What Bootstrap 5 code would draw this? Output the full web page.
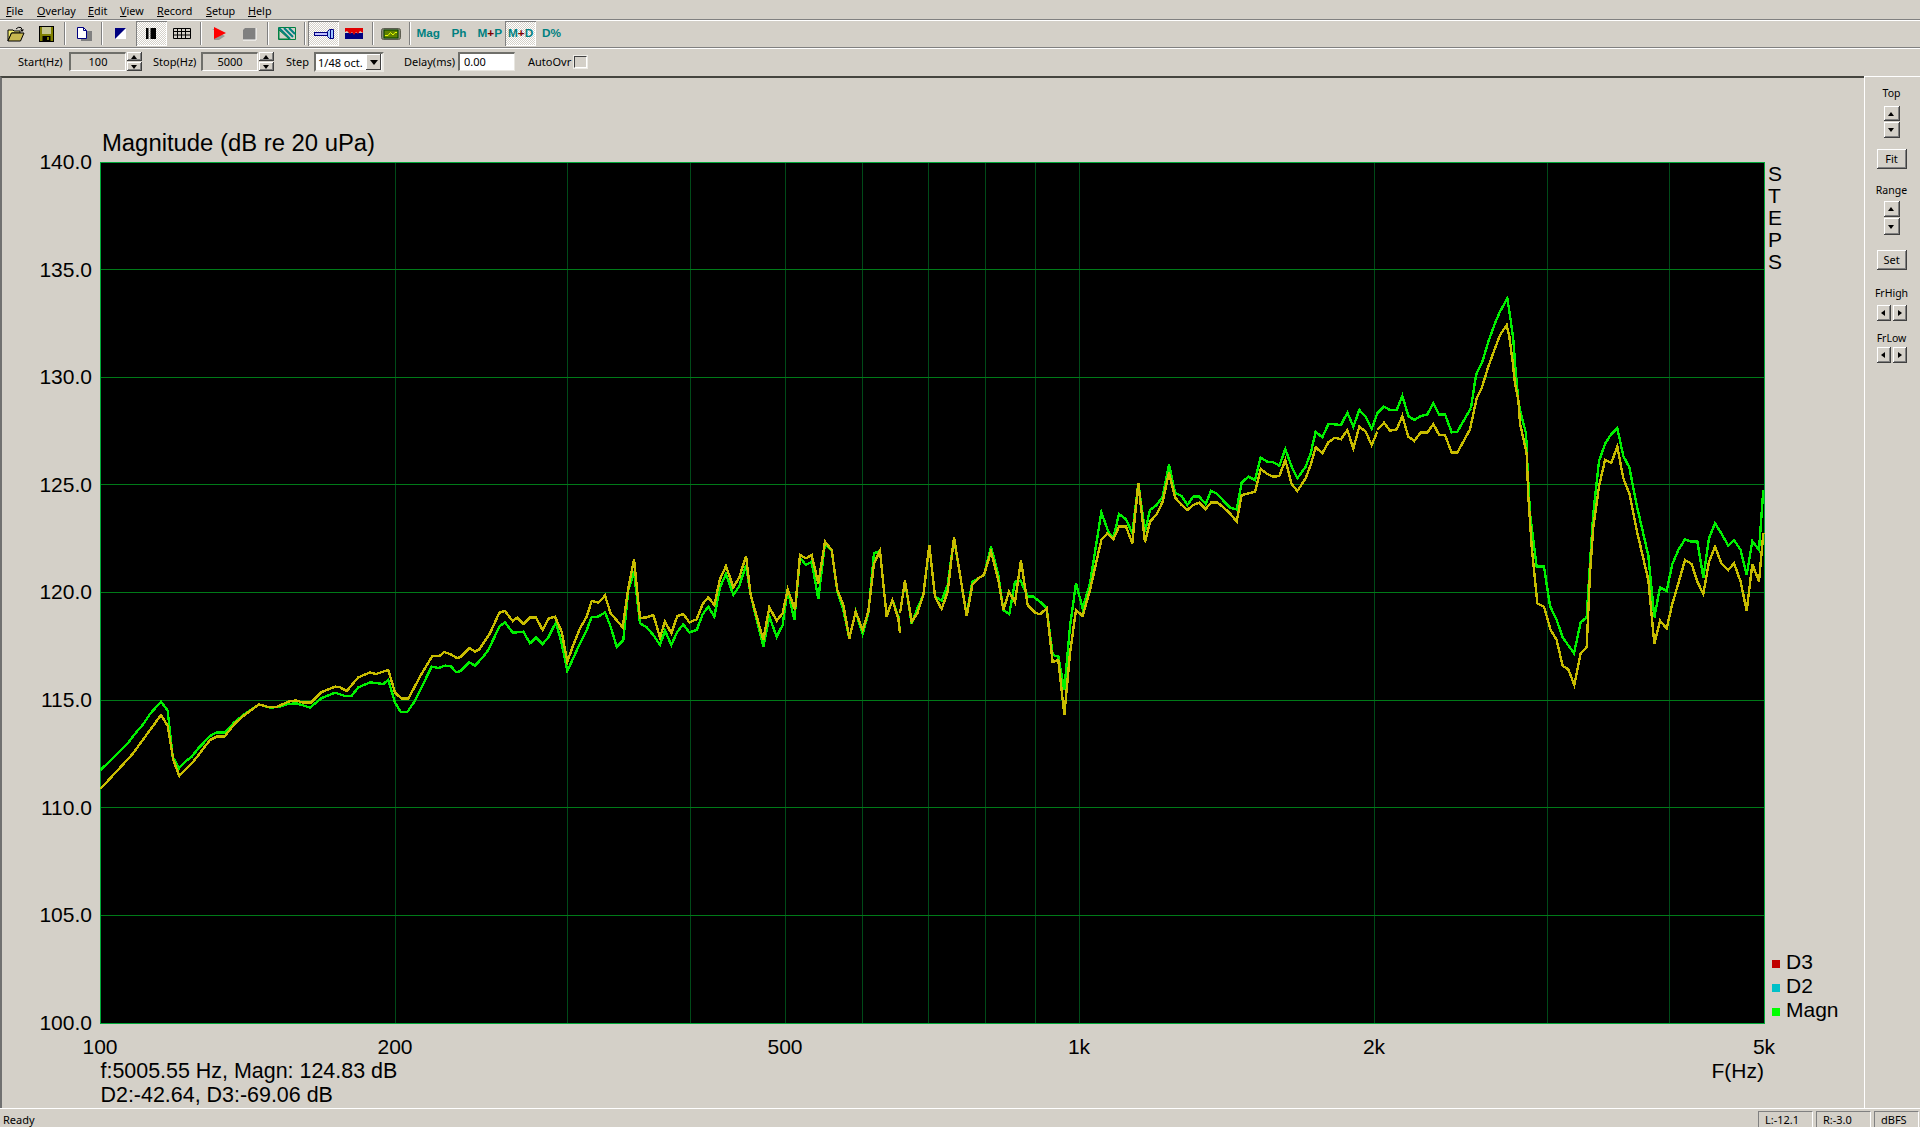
<!DOCTYPE html>
<html lang="en">
<head>
<meta charset="utf-8">
<title>Magnitude</title>
<link href="https://cdn.jsdelivr.net/npm/bootstrap@5.3.0/dist/css/bootstrap.min.css" rel="stylesheet">
<style>
html,body{height:100%;margin:0;overflow:hidden}
body{background:#d4d0c8;color:#000;font-family:"Noto Sans","DejaVu Sans",sans-serif;font-size:11px;line-height:14px}
.app-shell{height:1127px}
.menu-strip{height:20px;padding-left:6px;padding-top:3px;border-bottom:1px solid #808080}
.menu-strip .nav-link{color:#000;padding:0;font-size:10.8px;line-height:15px}
.m1{width:31px}.m2{width:51px}.m3{width:32px}.m4{width:37px}.m5{width:49px}.m6{width:42px}.m7{width:30px}
.tool-strip{height:28px;border-top:1px solid #fff;border-bottom:1px solid #808080;padding:0 0 1px .6px}
.btn.tool-btn{width:30.8px;height:25px;padding:0;border:0;border-radius:0;background:transparent;color:#008080;font:bold 11.8px/25px "Liberation Sans",sans-serif;display:flex;align-items:center;justify-content:center;flex:none}
.btn.tool-btn.is-on{background:repeating-conic-gradient(#fff 0 25%,#d4d0c8 0 50%) 0 0/2px 2px;box-shadow:inset 1px 1px #808080,inset -1px -1px #fff}
.plus-mark{color:#800000}
.tool-sep{width:6.1px;height:25px;flex:none;position:relative}
.tool-sep::before{content:"";display:block;margin:1px auto 0;width:2px;height:23px;background:linear-gradient(90deg,#808080 50%,#fff 50%)}
.param-strip{height:28px;border-top:1px solid #fff;padding:3px 0 0 18px}
.param-lbl{height:19px;line-height:19px;white-space:nowrap;flex:none}
.w51{width:51px}.w48{width:48px}.w28{width:28px}.w54{width:54px}.w46{width:46px}
.ml11{margin-left:11px}.ml12{margin-left:12px}.ml20{margin-left:20px}.ml13{margin-left:13px}
.sunk-box{width:57px;height:19px;flex:none;border-top:2px solid #6f6f6a;border-left:2px solid #6f6f6a;border-right:1px solid #fff;border-bottom:1px solid #fff;text-align:center;line-height:16px}
.sunk-box.is-white{background:#fff;text-align:left;padding-left:4px;border-color:#6f6f6a #e8e6e0 #e8e6e0 #6f6f6a}
.combo-box{width:70px;height:20px;flex:none;background:#fff;border:2px solid #6f6f6a;border-right-color:#e8e6e0;border-bottom-color:#e8e6e0;padding-left:2px;line-height:17px;position:relative}
.combo-arrow{position:absolute;right:1px;top:0;width:15px;height:16px;background:#d4d0c8;box-shadow:inset -1px -1px #404040,inset 1px 1px #fff}
.combo-arrow::after{content:"";position:absolute;left:3.5px;top:6px;border-left:4px solid transparent;border-right:4px solid transparent;border-top:5px solid #000}
.check-box{width:13px;height:12px;margin-top:4px;flex:none;background:#d4d0c8;border-top:1px solid #404040;border-left:1px solid #404040;border-right:1px solid #fff;border-bottom:1px solid #fff;box-shadow:0 0 0 1px #eeece6}
.raised-box{background:#d4d0c8;box-shadow:inset -1px -1px #404040,inset 1px 1px #fff,inset -2px -2px #808080;position:relative;flex:none}
.spin-pair{width:15.5px;height:19px;margin-left:.5px;gap:1px;flex:none}
.spin-pair .raised-box{height:9px}
.tri-up::after,.tri-down::after,.tri-left::after,.tri-right::after{content:"";position:absolute}
.tri-up::after{left:50%;top:50%;margin:-2px 0 0 -3.5px;border-left:3.5px solid transparent;border-right:3.5px solid transparent;border-bottom:4px solid #000}
.tri-down::after{left:50%;top:50%;margin:-2px 0 0 -3.5px;border-left:3.5px solid transparent;border-right:3.5px solid transparent;border-top:4px solid #000}
.tri-left::after{left:50%;top:50%;margin:-3.5px 0 0 -2.5px;border-top:3.5px solid transparent;border-bottom:3.5px solid transparent;border-right:4px solid #000}
.tri-right::after{left:50%;top:50%;margin:-3.5px 0 0 -1.5px;border-top:3.5px solid transparent;border-bottom:3.5px solid transparent;border-left:4px solid #000}
.main-row{flex:1 1 auto;min-height:0}
.chart-pane{width:1864px;flex:none;border-top:2px solid #45453f;border-left:2px solid #707070}
.chart-pane svg{display:block}
.chart-text{font-family:"Liberation Sans",Arial,sans-serif;font-size:21px;fill:#000}
.chart-title{font-size:23.85px}
.chart-read{font-size:21.45px}
.trace-line{fill:none;stroke-width:2.4;vector-effect:non-scaling-stroke;stroke-linejoin:miter}
.trace-g{stroke:#00f000}
.trace-y{stroke:#c8bc00}
.side-pane{width:56px;flex:none;border-top:1px solid #fff;border-left:1px solid #fff;padding:9px 2px 0 0;font-size:10.5px}
.side-pane .s-lbl{height:14px;line-height:14px}
.v-spin{width:16px}
.v-spin .s1{height:15px;width:16px}
.v-spin .s2{height:16px;width:16px;margin-top:1px}
.v-spin.v2 .s1{height:16px}.v-spin.v2 .s2{height:17px}
.btn.flat-btn{width:30px;height:20px;padding:0;border:0;border-radius:0;font:11px/20px "Noto Sans",sans-serif;color:#000}
.h-spin{width:30px;height:16px;justify-content:space-between}
.h-spin .raised-box{width:14px;height:16px}
.mt6{margin-top:6px}.mt11{margin-top:11px}.mt14{margin-top:14px}.mt4{margin-top:4px}.mt15{margin-top:15px}.mt16{margin-top:16px}.mt5{margin-top:5px}.mt10{margin-top:10px}.mt2{margin-top:2px}
.status-strip{height:19px;flex:none;border-top:1px solid #fff;padding:2px 1px 0 3px;position:relative}
.status-ready{line-height:17px}
.status-cell{height:17px;line-height:16px;border-top:1px solid #808080;border-left:1px solid #808080;padding-left:6px;border-right:1px solid #fff;flex:none}
.c55{width:55px;margin-right:3px}.c45{width:45px}
</style>
</head>
<body>
<div class="app-shell d-flex flex-column">
  <nav class="menu-strip nav flex-nowrap flex-shrink-0">
    <a class="nav-link m1" href="#"><u>F</u>ile</a>
    <a class="nav-link m2" href="#"><u>O</u>verlay</a>
    <a class="nav-link m3" href="#"><u>E</u>dit</a>
    <a class="nav-link m4" href="#"><u>V</u>iew</a>
    <a class="nav-link m5" href="#"><u>R</u>ecord</a>
    <a class="nav-link m6" href="#"><u>S</u>etup</a>
    <a class="nav-link m7" href="#"><u>H</u>elp</a>
  </nav>

  <div class="tool-strip d-flex align-items-center flex-shrink-0">
    <button class="btn tool-btn" type="button" aria-label="Open"><svg width="18" height="16" viewBox="0 0 18 16"><path d="M1 4h5l1 1h6v2H4.500L1 15z" fill="#f4ee70" stroke="#000"/><path d="M1 15 4.500 7H17l-3.500 8z" fill="#c8b850" stroke="#000"/><path d="M9 3Q11 .5 14 1.500l1 2" fill="none" stroke="#000"/><path d="M13 3.500h4l-2 2.500z"/></svg></button>
    <button class="btn tool-btn" type="button" aria-label="Save"><svg width="16" height="16" viewBox="0 0 16 16"><rect x=".5" y=".5" width="14" height="15" fill="#808000" stroke="#000"/><rect x="3" y="1" width="9" height="7" fill="#c4c490"/><rect x="3.500" y="10" width="8" height="5" fill="#000"/><rect x="8" y="11" width="2" height="3" fill="#808000"/></svg></button>
    <div class="tool-sep"></div>
    <button class="btn tool-btn" type="button" aria-label="Page"><svg width="16" height="14" viewBox="0 0 16 14"><rect x="5" y="4" width="11" height="10" fill="#808080"/><path d="M1.500.5h6l3 3v8h-9z" fill="#fff" stroke="#000080"/><path d="M7.500.5v3h3" fill="none" stroke="#000080"/></svg></button>
    <div class="tool-sep"></div>
    <button class="btn tool-btn" type="button" aria-label="Invert"><svg width="11" height="11" viewBox="0 0 11 11"><rect width="11" height="11" fill="#fff"/><path d="M0 0h11L0 11z" fill="#000080"/></svg></button>
    <button class="btn tool-btn is-on" type="button" aria-label="Pause"><svg width="12" height="11" viewBox="0 0 12 11"><rect x="1" width="2.500" height="11"/><rect x="5.500" width="5.500" height="11"/></svg></button>
    <button class="btn tool-btn" type="button" aria-label="Table"><svg width="18" height="11" viewBox="0 0 18 11"><path d="M.5.500h17v10H.500zM.5 3.500h17M.5 7h17M4.500.500v10M8.500.500v10M12.500.500v10" fill="none" stroke="#000"/></svg></button>
    <div class="tool-sep"></div>
    <button class="btn tool-btn" type="button" aria-label="Run"><svg width="16" height="14" viewBox="0 0 16 14"><path d="M1 2h2v11h5l6-4z" fill="#9a9a94"/><path d="M3 0l12 6L3 12z" fill="#f00"/></svg></button>
    <button class="btn tool-btn" type="button" aria-label="Stop"><svg width="15" height="14" viewBox="0 0 15 14"><path d="M3 1h11v12H1V3z" fill="#808080"/><path d="M14 1v12H1" fill="none" stroke="#fff"/></svg></button>
    <div class="tool-sep"></div>
    <button class="btn tool-btn" type="button" aria-label="Sweep"><svg width="18" height="13" viewBox="0 0 18 13"><path d="M.5.500H17.500v12H.500z" fill="#d4d0c8" stroke="#008040"/><path d="M1 1l11 11M6 1l9 9M11 1l6 6" stroke="#008080" stroke-width="2"/><path d="M1 3 1 12H11z" fill="#d4d0c8" stroke="#008040"/></svg></button>
    <div class="tool-sep"></div>
    <button class="btn tool-btn is-on" type="button" aria-label="Probe"><svg width="20" height="10" viewBox="0 0 20 10"><rect x=".5" y="3.500" width="13" height="3" fill="#c0c0ff" stroke="#000080"/><path d="M13.500 2.500 15.500.5h4v9h-4l-2-2z" fill="#a0c8ff" stroke="#000080"/><path d="M16.500.5v9" stroke="#000080"/></svg></button>
    <button class="btn tool-btn" type="button" aria-label="Spectrum"><svg width="18" height="11" viewBox="0 0 18 11"><rect y="5" width="18" height="6" fill="#000080"/><path d="M0 0h18v5l-3-2-2 3-2-2-2 3-2-3-2 2-3-3-2 1z" fill="#e00000"/></svg></button>
    <div class="tool-sep"></div>
    <button class="btn tool-btn" type="button" aria-label="Scope"><svg width="20" height="12" viewBox="0 0 20 12"><rect x=".5" y=".5" width="19" height="11" rx="2" fill="#8c8c78" stroke="#5c5c50"/><rect x="3" y="2" width="14" height="8" fill="#608000" stroke="#004000"/><path d="M4 7.500 7 7.500 9.500 4.500 12 7l2-2.500h2" fill="none" stroke="#e8ff00"/></svg></button>
    <div class="tool-sep"></div>
    <button class="btn tool-btn" type="button">Mag</button>
    <button class="btn tool-btn" type="button">Ph</button>
    <button class="btn tool-btn" type="button"><span>M<span class="plus-mark">+</span>P</span></button>
    <button class="btn tool-btn is-on" type="button"><span>M<span class="plus-mark">+</span>D</span></button>
    <button class="btn tool-btn" type="button">D%</button>
  </div>

  <div class="param-strip d-flex align-items-start flex-shrink-0">
    <span class="param-lbl w51">Start(Hz)</span>
    <div class="sunk-box">100</div>
    <div class="spin-pair d-flex flex-column"><div class="raised-box tri-up"></div><div class="raised-box tri-down"></div></div>
    <span class="param-lbl w48 ml11">Stop(Hz)</span>
    <div class="sunk-box">5000</div>
    <div class="spin-pair d-flex flex-column"><div class="raised-box tri-up"></div><div class="raised-box tri-down"></div></div>
    <span class="param-lbl w28 ml12">Step</span>
    <div class="combo-box">1/48 oct.<span class="combo-arrow"></span></div>
    <span class="param-lbl w54 ml20">Delay(ms)</span>
    <div class="sunk-box is-white">0.00</div>
    <span class="param-lbl w46 ml13">AutoOvr</span>
    <div class="check-box"></div>
  </div>

  <div class="main-row d-flex">
    <div class="chart-pane">
      <svg width="1862" height="1030" viewBox="2 78 1862 1030" role="img" aria-label="Magnitude chart">
        <rect x="100" y="162" width="1664" height="861" fill="#000"/>
        <g shape-rendering="crispEdges" stroke="#004a18" stroke-width="1">
          <path d="M395.500 162V1023M567.500 162V1023M690.500 162V1023M785.500 162V1023M862.500 162V1023M928.500 162V1023M985.500 162V1023M1035.500 162V1023M1079.500 162V1023M1374.500 162V1023M1547.500 162V1023M1669.500 162V1023"/>
          <path stroke="#007a18" d="M101 269.500H1764M101 377.500H1764M101 484.500H1764M101 592.500H1764M101 700.500H1764M101 807.500H1764M101 915.500H1764"/>
          <path stroke="#00a838" d="M100 162.500H1764M100 1023.500H1764M100.500 162V1024M1764.500 162V1024"/>
        </g>

        <g class="trace-g" shape-rendering="crispEdges">
          <g transform="translate(90 560) scale(.33333)"><polyline class="trace-line" points="32,630 115,548 140,515 158,495 180,462 213,425 233,452 248,590 267,625 285,605 305,590 325,565 360,528 378,518 403,518 435,485 460,465 507,433 540,443 565,441 595,432 620,430 660,443 695,414 735,398 765,408 785,407 805,382 840,367 880,372 895,360 915,428 932,456 952,456 975,422 1025,320 1045,324 1065,317 1082,318 1098,336 1110,334 1138,307 1155,317 1180,290 1195,270 1228,200"/></g>
          <g transform="translate(500 500) scale(.33333)"><polyline class="trace-line" points="-2,380 15,367 38,398 70,395 90,430 108,413 128,432 145,412 168,367 185,430 202,513 240,430 260,390 275,351 295,350 315,337 332,380 350,440 370,420 385,270 402,215 420,370 440,382 460,405 480,435 495,392 514,435 532,395 550,373 568,397 590,390 608,343 625,320 643,350 660,262 678,222 700,285 718,258 738,195 752,285 790,440 808,350 830,410 848,375 863,268 883,360 900,173 918,195 935,185 955,297 975,130 995,150 1012,275 1030,330 1048,415 1067,335 1088,402 1105,340 1122,160 1140,153 1160,350 1177,300 1195,350 1200,400"/></g>
          <g transform="translate(900 480) scale(.33333)"><polyline class="trace-line" points="0,400 15,302 35,432 52,385 70,345 88,195 105,350 125,362 143,315 162,175 200,405 217,305 235,295 252,285 273,200 295,285 310,390 328,402 345,305 362,302 383,350 400,350 420,365 440,385 458,525 475,530 493,630 510,440 528,310 548,385 570,310 604,97 625,155 640,175 657,102 678,118 697,160 715,10 735,155 750,90 770,75 788,50"/></g>
          <g transform="translate(1140 410) scale(.33333)"><polyline class="trace-line" points="68,260 87,163 105,248 125,258 142,285 160,260 178,260 197,282 213,242 232,252 250,272 270,293 290,298 305,218 325,200 345,210 362,143 382,155 400,157 418,167 436,117 455,170 472,205 497,170 512,130 527,65 547,82 565,42 585,43 603,45 622,8 640,50 658,0 677,20 695,57 712,10"/></g>
          <g transform="translate(1300 380) scale(.33333)"><polyline class="trace-line" points="232,100 252,80 270,90 290,90 307,48 325,108 343,120 362,108 382,103 400,70 417,103 435,103 455,157 472,155 495,115 513,85"/></g>
          <g transform="translate(1450 290) scale(.33333)"><polyline class="trace-line" points="63,354 78,255 97,215 115,155 135,100 150,65 172,25 182,90 190,150 197,245 205,330 210,360"/></g>
          <g transform="translate(1300 380) scale(.33333)"><polyline class="trace-line" points="660,90 678,160 682,250 690,400 710,560 732,560 750,678 770,720 788,772 822,820 842,727 860,712 870,550 880,400 897,243 916,190 932,165 952,145 970,228 988,262 1010,375 1045,527 1063,712 1080,622 1100,633 1117,552 1135,510 1155,478 1172,485 1192,485 1210,592 1227,475 1245,430 1265,462 1285,497 1302,480 1322,510 1340,585 1357,483 1377,510 1390,330"/></g>
        </g>
        <g class="trace-y" shape-rendering="crispEdges">
          <g transform="translate(90 560) scale(.33333)"><polyline class="trace-line" points="32,686 125,585 140,565 213,465 233,498 250,600 268,648 310,605 360,540 380,530 403,530 435,490 460,468 507,433 535,441 560,441 595,425 618,421 640,428 662,428 695,396 735,380 748,381 770,393 805,352 840,337 858,342 895,330 915,398 935,416 955,416 990,350 1027,288 1048,288 1063,276 1082,283 1100,294 1110,292 1138,264 1155,275 1168,268 1200,220 1228,158"/></g>
          <g transform="translate(500 500) scale(.33333)"><polyline class="trace-line" points="-2,338 15,333 38,363 52,353 70,372 90,353 108,353 128,390 145,356 165,350 185,395 202,485 220,435 240,385 260,350 275,303 295,308 315,287 332,340 368,382 385,265 402,178 420,354 440,352 460,345 480,412 495,365 514,400 532,348 550,342 568,367 590,358 608,312 625,292 643,315 660,237 678,198 700,262 718,232 738,168 752,285 790,420 808,322 830,362 848,340 863,268 885,330 900,165 918,175 935,165 955,250 975,125 995,150 1012,270 1030,315 1048,415 1067,335 1088,390 1105,335 1122,190 1140,153 1160,350 1177,300 1195,355 1200,400"/></g>
          <g transform="translate(900 480) scale(.33333)"><polyline class="trace-line" points="0,400 15,302 35,425 52,400 70,345 88,195 105,350 125,387 143,335 162,172 200,408 217,315 235,295 252,285 273,215 295,300 310,390 327,335 345,367 363,242 383,375 405,398 420,403 440,385 458,546 475,540 493,705 510,520 528,390 548,408 570,330 604,180 622,160 640,178 657,140 678,140 697,190 715,10 735,187 750,125 770,103 788,65"/></g>
          <g transform="translate(1140 410) scale(.33333)"><polyline class="trace-line" points="68,275 87,187 105,262 125,285 142,300 160,285 178,278 197,297 213,278 232,277 250,292 270,310 290,335 305,255 345,245 362,177 382,192 400,200 418,198 436,150 455,222 472,243 497,205 512,165 527,112 547,130 565,97 585,83 603,88 622,60 640,115 658,50 677,65 695,105 712,65"/></g>
          <g transform="translate(1300 380) scale(.33333)"><polyline class="trace-line" points="232,150 252,128 270,152 290,148 307,108 325,170 343,183 362,158 382,158 400,132 417,164 435,165 455,218 472,218 510,148 530,55"/></g>
          <g transform="translate(1450 290) scale(.33333)"><polyline class="trace-line" points="80,325 95,295 115,230 135,175 150,135 170,105 178,140 188,215 195,280 205,330 210,399"/></g>
          <g transform="translate(1300 380) scale(.33333)"><polyline class="trace-line" points="660,130 680,220 685,350 695,500 712,670 732,680 752,750 770,780 788,858 805,868 823,915 842,820 860,803 870,580 880,440 897,320 915,240 934,248 952,200 970,295 988,340 1010,450 1045,600 1063,792 1080,722 1100,745 1117,672 1135,610 1155,540 1175,552 1192,605 1210,642 1227,545 1245,500 1265,552 1285,570 1302,550 1322,605 1340,693 1357,552 1377,605 1390,460"/></g>
        </g>

        <text class="chart-text chart-title" x="102" y="151">Magnitude (dB re 20 uPa)</text>
        <g class="chart-text" text-anchor="end">
          <text x="92" y="169">140.0</text><text x="92" y="277">135.0</text><text x="92" y="384">130.0</text><text x="92" y="492">125.0</text><text x="92" y="599">120.0</text><text x="92" y="707">115.0</text><text x="92" y="815">110.0</text><text x="92" y="922">105.0</text><text x="92" y="1030">100.0</text>
        </g>
        <g class="chart-text" text-anchor="middle">
          <text x="100" y="1054">100</text><text x="395" y="1054">200</text><text x="785" y="1054">500</text><text x="1079" y="1054">1k</text><text x="1374" y="1054">2k</text><text x="1764" y="1054">5k</text>
        </g>
        <text class="chart-text" x="1764" y="1078" text-anchor="end">F(Hz)</text>
        <text class="chart-text chart-read" x="100.500" y="1078">f:5005.55 Hz, Magn: 124.83 dB</text>
        <text class="chart-text chart-read" x="100.500" y="1102">D2:-42.64, D3:-69.06 dB</text>
        <g class="chart-text">
          <text x="1768" y="181">S</text><text x="1768" y="203">T</text><text x="1768" y="225">E</text><text x="1768" y="247">P</text><text x="1768" y="269">S</text>
          <text x="1786" y="969">D3</text><text x="1786" y="993">D2</text><text x="1786" y="1017">Magn</text>
        </g>
        <rect x="1772" y="960" width="8" height="8" fill="#c00000"/>
        <rect x="1772" y="984" width="8" height="8" fill="#00c0c8"/>
        <rect x="1772" y="1008" width="8" height="8" fill="#00ff00"/>
      </svg>
    </div>

    <aside class="side-pane d-flex flex-column align-items-center">
      <div class="s-lbl">Top</div>
      <div class="v-spin mt6 d-flex flex-column"><div class="raised-box s1 tri-up"></div><div class="raised-box s2 tri-down"></div></div>
      <button class="btn flat-btn raised-box mt11" type="button">Fit</button>
      <div class="s-lbl mt14">Range</div>
      <div class="v-spin v2 mt4 d-flex flex-column"><div class="raised-box s1 tri-up"></div><div class="raised-box s2 tri-down"></div></div>
      <button class="btn flat-btn raised-box mt15" type="button">Set</button>
      <div class="s-lbl mt16">FrHigh</div>
      <div class="h-spin mt5 d-flex"><div class="raised-box tri-left"></div><div class="raised-box tri-right"></div></div>
      <div class="s-lbl mt10">FrLow</div>
      <div class="h-spin mt2 d-flex"><div class="raised-box tri-left"></div><div class="raised-box tri-right"></div></div>
    </aside>
  </div>

  <footer class="status-strip d-flex">
    <span class="status-ready flex-grow-1">Ready</span>
    <div class="status-cell c55">L:-12.1</div>
    <div class="status-cell c55">R:-3.0</div>
    <div class="status-cell c45">dBFS</div>
  </footer>
</div>
<script src="https://cdn.jsdelivr.net/npm/bootstrap@5.3.0/dist/js/bootstrap.bundle.min.js"></script>
</body>
</html>
